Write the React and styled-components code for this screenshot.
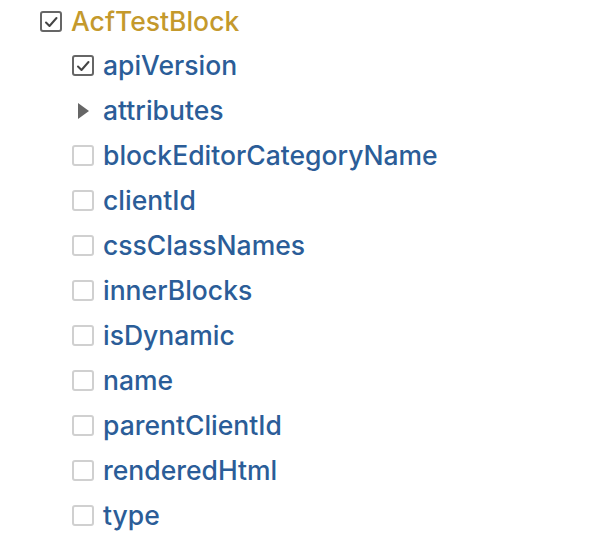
import React from 'react';
import styled, { createGlobalStyle } from 'styled-components';

const GlobalStyle = createGlobalStyle`
  html, body {
    margin: 0;
    padding: 0;
    background: #fff;
  }
  body {
    font-family: Inter, "Noto Sans", sans-serif;
    -webkit-font-smoothing: antialiased;
  }
`;

const Tree = styled.ul`
  list-style: none;
  margin: 0;
  padding: 0 0 0 40px;
`;

const Children = styled.ul`
  list-style: none;
  margin: 0;
  padding: 0 0 0 32px;
`;

const Row = styled.li`
  display: flex;
  align-items: center;
  height: 45px;
  gap: 9px;
  &:first-child {
    margin-top: -1px;
  }
`;

const Box = styled.span`
  box-sizing: border-box;
  width: 22px;
  height: 21px;
  border: 2px solid ${(p) => (p.checked ? '#666' : '#d0d0d0')};
  border-radius: 3px;
  display: flex;
  align-items: center;
  justify-content: center;
  flex-shrink: 0;
  svg {
    display: block;
  }
`;

const Caret = styled.span`
  width: 22px;
  display: flex;
  justify-content: center;
  flex-shrink: 0;
  &:before {
    content: '';
    display: block;
    border-top: 8px solid transparent;
    border-bottom: 8px solid transparent;
    border-left: 11px solid #666;
    margin-left: 1px;
  }
`;

const Label = styled.span`
  font-size: 26.5px;
  font-weight: 500;
  color: ${(p) => (p.root ? '#c4992c' : '#2b5d98')};
  line-height: 1;
`;

const Check = () => (
  <svg width="14" height="12" viewBox="0 0 14 12">
    <path d="M2 6.5 L5.5 10 L12.5 2" fill="none" stroke="#444" strokeWidth="2" strokeLinecap="round" strokeLinejoin="round" />
  </svg>
);

const fields = [
  { name: 'apiVersion', checked: true },
  { name: 'attributes', expandable: true },
  { name: 'blockEditorCategoryName' },
  { name: 'clientId' },
  { name: 'cssClassNames' },
  { name: 'innerBlocks' },
  { name: 'isDynamic' },
  { name: 'name' },
  { name: 'parentClientId' },
  { name: 'renderedHtml' },
  { name: 'type' },
];

export default function App() {
  return (
    <>
      <GlobalStyle />
      <Tree>
        <Row>
          <Box checked>
            <Check />
          </Box>
          <Label root>AcfTestBlock</Label>
        </Row>
        <li>
          <Children>
            {fields.map((f) => (
              <Row key={f.name}>
                {f.expandable ? (
                  <Caret />
                ) : (
                  <Box checked={f.checked}>{f.checked && <Check />}</Box>
                )}
                <Label>{f.name}</Label>
              </Row>
            ))}
          </Children>
        </li>
      </Tree>
    </>
  );
}
